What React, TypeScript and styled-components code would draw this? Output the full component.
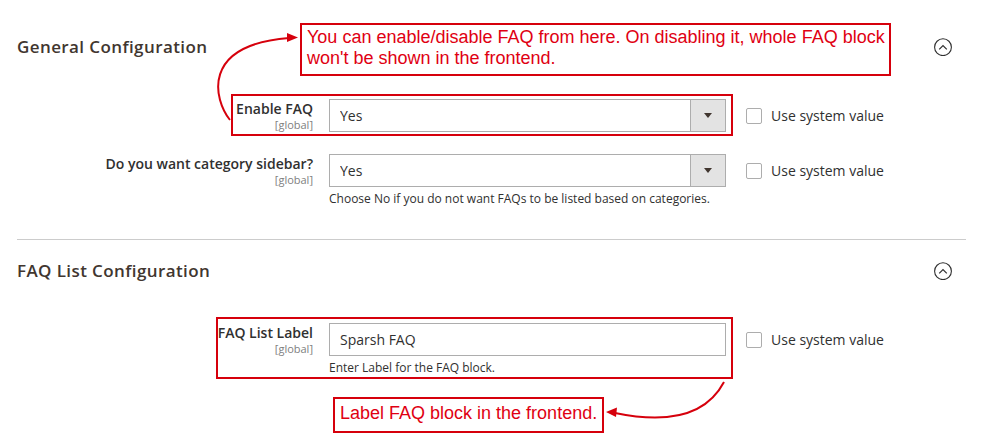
import styled, { createGlobalStyle } from 'styled-components';

const GlobalStyle = createGlobalStyle`
  html,
  body {
    margin: 0;
    padding: 0;
    background: #ffffff;
  }
  body {
    font-family: 'Open Sans', 'Liberation Sans', Arial, sans-serif;
    color: #303030;
  }
`;

const Page = styled.div`
  position: relative;
  width: 986px;
  height: 446px;
  padding: 0 20px 0 17px;
  box-sizing: border-box;
  overflow: hidden;
`;

const Section = styled.section<{ $divided?: boolean }>`
  padding-top: ${(p) => (p.$divided ? '19px' : '35px')};
  padding-bottom: ${(p) => (p.$divided ? '0' : '32px')};
  border-top: ${(p) => (p.$divided ? '1px solid #cccccc' : 'none')};
`;

const SectionHead = styled.div`
  display: flex;
  align-items: center;
  height: 24px;
`;

const SectionTitle = styled.h3`
  flex: 1;
  margin: 0;
  font-size: 17px;
  line-height: 24px;
  font-weight: 600;
  color: #41362f;
  letter-spacing: 0.4px;
`;

const Toggle = styled.svg`
  width: 18px;
  height: 18px;
  margin-right: 14px;
  flex-shrink: 0;
`;

const Fields = styled.div`
  display: flex;
  flex-direction: column;
  gap: 22px;
  margin-top: 40px;
`;

const FieldRow = styled.div`
  display: grid;
  grid-template-columns: 296px 397px auto;
  column-gap: 16px;
  align-items: start;
  & > :last-child {
    margin-left: 4px;
  }
`;

const LabelCell = styled.div`
  text-align: right;
`;

const Label = styled.div`
  font-size: 14px;
  line-height: 19px;
  font-weight: 600;
  color: #303030;
`;

const Scope = styled.div`
  font-size: 11px;
  line-height: 15px;
  margin-top: -1px;
  color: #808080;
`;

const ControlCell = styled.div`
  display: flex;
  flex-direction: column;
`;

const SelectWrap = styled.div`
  display: flex;
  height: 33px;
  border: 1px solid #adadad;
  box-sizing: border-box;
  background: #ffffff;
`;

const SelectField = styled.select`
  flex: 1;
  appearance: none;
  border: none;
  outline: none;
  background: transparent;
  padding: 0 10px;
  font-family: 'Open Sans', sans-serif;
  font-size: 14px;
  color: #303030;
`;

const SelectArrow = styled.div`
  width: 34px;
  display: flex;
  align-items: center;
  justify-content: center;
  background: #e3e3e3;
  border-left: 1px solid #adadad;
  &::after {
    content: '';
    border-top: 5px solid #41362f;
    border-left: 4px solid transparent;
    border-right: 4px solid transparent;
  }
`;

const TextInput = styled.input`
  height: 33px;
  width: 100%;
  box-sizing: border-box;
  border: 1px solid #adadad;
  padding: 0 10px;
  font-family: 'Open Sans', sans-serif;
  font-size: 14px;
  color: #303030;
  outline: none;
`;

const Note = styled.div`
  margin-top: 4px;
  font-size: 12px;
  line-height: 16px;
  color: #303030;
`;

const SystemValue = styled.label`
  display: flex;
  align-items: center;
  gap: 9px;
  height: 33px;
  font-size: 14px;
  color: #303030;
`;

const CheckBox = styled.span`
  width: 16px;
  height: 16px;
  box-sizing: border-box;
  border: 1px solid #adadad;
  border-radius: 2px;
  background: #ffffff;
`;

const Callout = styled.div<{ $x: number; $y: number; $w: number; $h: number; $pt: number }>`
  position: absolute;
  left: ${(p) => p.$x}px;
  top: ${(p) => p.$y}px;
  width: ${(p) => p.$w}px;
  height: ${(p) => p.$h}px;
  box-sizing: border-box;
  border: 2px solid #d6000c;
  padding: ${(p) => p.$pt}px 4px 0 5px;
  font-family: 'Liberation Sans', Arial, sans-serif;
  font-size: 18px;
  line-height: 21px;
  color: #e00012;
  white-space: nowrap;
  background: #ffffff;
`;

const Highlight = styled.div<{ $x: number; $y: number; $w: number; $h: number }>`
  position: absolute;
  left: ${(p) => p.$x}px;
  top: ${(p) => p.$y}px;
  width: ${(p) => p.$w}px;
  height: ${(p) => p.$h}px;
  box-sizing: border-box;
  border: 2px solid #d6000c;
  pointer-events: none;
`;

const Arrows = styled.svg`
  position: absolute;
  left: 0;
  top: 0;
  width: 986px;
  height: 446px;
  pointer-events: none;
`;

const CollapseIcon = () => (
  <Toggle viewBox="0 0 18 18">
    <circle cx="9" cy="9.2" r="8.4" fill="none" stroke="#303030" strokeWidth="1.1" />
    <path d="M5.2 11.4 L9 7.5 L12.8 11.4" fill="none" stroke="#303030" strokeWidth="1.2" />
  </Toggle>
);

const UseSystem = () => (
  <SystemValue>
    <CheckBox />
    Use system value
  </SystemValue>
);

const Dropdown = ({ value }: { value: string }) => (
  <SelectWrap>
    <SelectField defaultValue={value}>
      <option>Yes</option>
      <option>No</option>
    </SelectField>
    <SelectArrow />
  </SelectWrap>
);

const App = () => {
  return (
    <>
      <GlobalStyle />
      <Page>
        <Section>
          <SectionHead>
            <SectionTitle>General Configuration</SectionTitle>
            <CollapseIcon />
          </SectionHead>
          <Fields>
            <FieldRow>
              <LabelCell>
                <Label>Enable FAQ</Label>
                <Scope>[global]</Scope>
              </LabelCell>
              <ControlCell>
                <Dropdown value="Yes" />
              </ControlCell>
              <UseSystem />
            </FieldRow>
            <FieldRow>
              <LabelCell>
                <Label>Do you want category sidebar?</Label>
                <Scope>[global]</Scope>
              </LabelCell>
              <ControlCell>
                <Dropdown value="Yes" />
                <Note>Choose No if you do not want FAQs to be listed based on categories.</Note>
              </ControlCell>
              <UseSystem />
            </FieldRow>
          </Fields>
        </Section>

        <Section $divided>
          <SectionHead>
            <SectionTitle>FAQ List Configuration</SectionTitle>
            <CollapseIcon />
          </SectionHead>
          <Fields>
            <FieldRow>
              <LabelCell>
                <Label>FAQ List Label</Label>
                <Scope>[global]</Scope>
              </LabelCell>
              <ControlCell>
                <TextInput defaultValue="Sparsh FAQ" />
                <Note>Enter Label for the FAQ block.</Note>
              </ControlCell>
              <UseSystem />
            </FieldRow>
          </Fields>
        </Section>

        {/* annotations drawn over the form */}
        <Highlight $x={231} $y={94} $w={502} $h={42} />
        <Highlight $x={216} $y={317} $w={517} $h={62} />
        <Callout $x={300} $y={23} $w={591} $h={53} $pt={2}>
          You can enable/disable FAQ from here. On disabling it, whole FAQ block
          <br />
          won't be shown in the frontend.
        </Callout>
        <Callout $x={333} $y={397} $w={271} $h={36} $pt={4}>
          Label FAQ block in the frontend.
        </Callout>
        <Arrows viewBox="0 0 986 446">
          <path d="M230 120 C214 100, 200 45, 289 38" fill="none" stroke="#d6000c" strokeWidth="2" />
          <polygon points="298,37.5 287,33 287,42" fill="#d6000c" />
          <path d="M724 382 C706 416, 668 424, 615 413" fill="none" stroke="#d6000c" strokeWidth="2" />
          <polygon points="606,412 617,407.5 616,417" fill="#d6000c" />
        </Arrows>
      </Page>
    </>
  );
};

export default App;
